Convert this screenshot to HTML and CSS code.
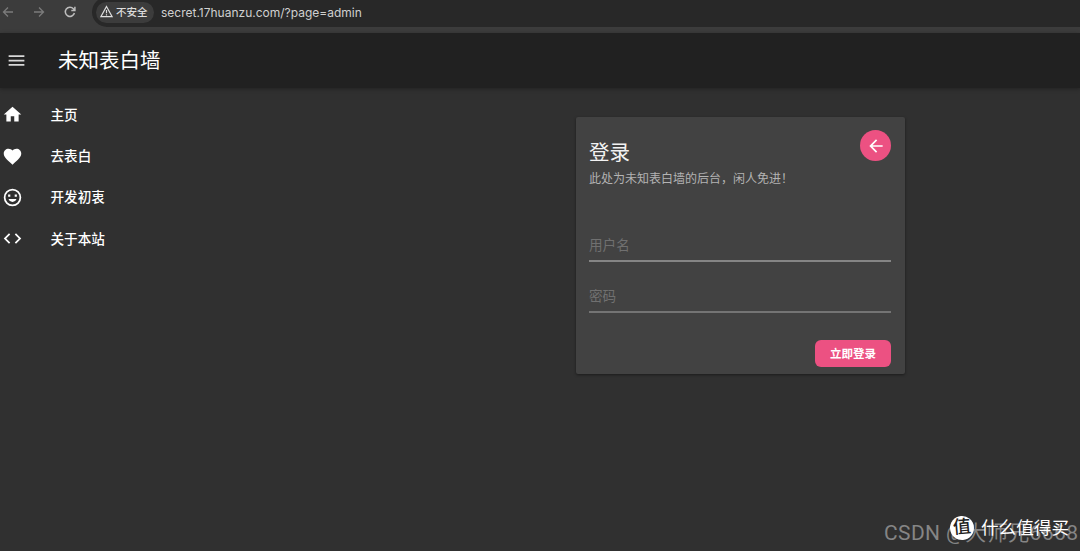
FILE: index.html
```html
<!DOCTYPE html>
<html lang="zh-CN">
<head>
    <meta charset="UTF-8">
    <meta name="viewport" content="width=device-width, initial-scale=1.0">
    <title>未知表白墙</title>
    <link rel="stylesheet" href="styles.css">
</head>
<body>
    <div class="browser-bar">
        <svg class="nav-icon" viewBox="0 0 12 12"><path d="M11 6H1.5M6 1.5L1.5 6L6 10.5"/></svg>
        <svg class="nav-icon" viewBox="0 0 12 12"><path d="M1 6H10.5M6 1.5L10.5 6L6 10.5"/></svg>
        <svg class="nav-icon reload" viewBox="0 0 12 12"><path d="M10.4 7A4.6 4.6 0 1 1 9.4 2.8L10.8 4.2M10.9 0.8V4.4H7.3"/></svg>
        <div class="address">
            <span class="chip">
                <svg class="warn" viewBox="0 0 12 12"><path d="M6 1.4L11.2 10.7H0.8ZM6 4.6V7.6M6 8.6V9.6"/></svg>
                不安全
            </span>
            <span class="url">secret.17huanzu.com/?page=admin</span>
        </div>
    </div>

    <header class="appbar">
        <svg class="menu-icon" viewBox="0 0 24 24"><path d="M3 18h18v-2H3v2zm0-5h18v-2H3v2zm0-7v2h18V6H3z"/></svg>
        <h1>未知表白墙</h1>
    </header>

    <div class="content">
        <nav class="drawer">
            <a class="item">
                <svg viewBox="0 0 24 24"><path d="M10 20v-6h4v6h5v-8h3L12 3 2 12h3v8z"/></svg>
                <span>主页</span>
            </a>
            <a class="item">
                <svg viewBox="0 0 24 24"><path d="M12 21.35l-1.45-1.32C5.4 15.36 2 12.28 2 8.5 2 5.42 4.42 3 7.5 3c1.74 0 3.41.81 4.5 2.09C13.09 3.81 14.76 3 16.5 3 19.58 3 22 5.42 22 8.5c0 3.78-3.4 6.86-8.55 11.54L12 21.35z"/></svg>
                <span>去表白</span>
            </a>
            <a class="item">
                <svg viewBox="0 0 24 24"><path d="M12 2a10 10 0 1 0 0 20a10 10 0 0 0 0-20zM12 20a8 8 0 1 1 0-16a8 8 0 0 1 0 16zM7 8.5h2.5v2.5H7zM14.5 8.5H17v2.5h-2.5zM7.5 13.8c.6 2 2.3 3.2 4.5 3.2s3.9-1.2 4.5-3.2z"/></svg>
                <span>开发初衷</span>
            </a>
            <a class="item">
                <svg viewBox="0 0 24 24"><path d="M9.4 16.6L4.8 12l4.6-4.6L8 6l-6 6 6 6 1.4-1.4zm5.2 0l4.6-4.6-4.6-4.6L16 6l6 6-6 6-1.4-1.4z"/></svg>
                <span>关于本站</span>
            </a>
        </nav>

        <form class="card">
            <div class="card-head">
                <div>
                    <h2>登录</h2>
                    <p>此处为未知表白墙的后台，闲人免进！</p>
                </div>
                <button type="button" class="back" aria-label="返回">
                    <svg viewBox="0 0 24 24"><path d="M20 11H7.83l5.59-5.59L12 4l-8 8 8 8 1.41-1.41L7.83 13H20v-2z"/></svg>
                </button>
            </div>
            <input type="text" name="username" placeholder="用户名">
            <input type="password" name="password" placeholder="密码">
            <button type="submit" class="submit">立即登录</button>
        </form>
    </div>

    <div class="csdn">CSDN @大师兄6668</div>
    <div class="smzdm"><span class="badge">值</span>什么值得买</div>
</body>
</html>
```

FILE: styles.css
```css
* {
    box-sizing: border-box;
}

body {
    margin: 0;
    height: 551px;
    overflow: hidden;
    position: relative;
    background-color: #303030;
    color: #ffffff;
    font-family: "Liberation Sans", "Noto Sans CJK SC", sans-serif;
}

.browser-bar {
    display: flex;
    align-items: flex-start;
    height: 33px;
    background-color: #3c3c3c;
}

.nav-icon {
    width: 12px;
    height: 12px;
    margin: 6px 17px 0 2px;
    fill: none;
    stroke: #7b7b7b;
    stroke-width: 1.3;
}

.nav-icon.reload {
    margin-right: 16px;
    stroke: #bdbdbd;
    stroke-width: 1.5;
}

.address {
    flex: 1;
    display: flex;
    align-items: center;
    height: 30px;
    margin-top: -3px;
    padding-left: 4px;
    border-radius: 15px 0 0 15px;
    background-color: #282828;
}

.chip {
    display: flex;
    align-items: center;
    width: 58px;
    height: 21px;
    padding: 0 0 1px 4px;
    border-radius: 11px;
    background-color: #3c3c3c;
    font-size: 10.5px;
    font-weight: 500;
    color: #dddddd;
    white-space: nowrap;
}

.warn {
    width: 13px;
    height: 13px;
    margin-right: 3px;
    fill: none;
    stroke: #dddddd;
    stroke-width: 1.1;
}

.url {
    margin-left: 7px;
    font-family: Inter, sans-serif;
    font-size: 12px;
    color: #d0d0d0;
}

.appbar {
    position: relative;
    display: flex;
    align-items: center;
    height: 55px;
    padding-left: 6px;
    background-color: #212121;
    box-shadow: 0 1px 4px rgba(0, 0, 0, 0.3);
}

.menu-icon {
    width: 21px;
    height: 21px;
    margin-right: 31px;
    fill: #d8d8d8;
}

h1 {
    margin: 0;
    font-size: 20.5px;
    line-height: 30px;
    font-weight: 400;
}

.content {
    display: flex;
    align-items: flex-start;
}

.drawer {
    width: 575.5px;
    padding-top: 6.4px;
}

.item {
    display: flex;
    align-items: center;
    height: 41.2px;
    padding-left: 2.4px;
    font-size: 13.6px;
    font-weight: 500;
}

.item span {
    padding-bottom: 2px;
}

.item svg {
    width: 21px;
    height: 21px;
    margin-right: 27.1px;
    fill: #ffffff;
}

.card {
    display: flex;
    flex-direction: column;
    width: 329.5px;
    height: 257px;
    margin-top: 29px;
    padding: 13.4px 14px 0 13.5px;
    border-radius: 2px;
    background-color: #424242;
    box-shadow: 0 1px 3px rgba(0, 0, 0, 0.45);
}

.card-head {
    display: flex;
    justify-content: space-between;
    height: 98px;
}

h2 {
    margin: 8px 0 0;
    font-size: 20.5px;
    line-height: 30px;
    font-weight: 400;
    color: #f2f2f2;
}

p {
    margin: 2px 0 0;
    font-size: 12px;
    line-height: 18px;
    color: #b3b3b3;
}

.back {
    display: flex;
    align-items: center;
    justify-content: center;
    width: 31px;
    height: 31px;
    padding: 0;
    border: none;
    border-radius: 50%;
    background-color: #ec5182;
}

.back svg {
    width: 20px;
    height: 20px;
    fill: #ffffff;
}

input {
    width: 302px;
    height: 34px;
    margin: 0 0 17px;
    padding: 2px 0 0;
    border: none;
    border-bottom: 2px solid #858585;
    border-radius: 0;
    background: none;
    font-family: inherit;
    font-size: 13.6px;
    color: #ffffff;
}

input[type="password"] {
    border-bottom-color: #747474;
}

input::placeholder {
    color: #707070;
}

.submit {
    align-self: flex-end;
    width: 76px;
    height: 27px;
    margin-top: 10px;
    padding: 0 0 1px;
    border: none;
    border-radius: 6px;
    background-color: #ec5182;
    color: #ffffff;
    font-family: inherit;
    font-size: 11.5px;
    font-weight: 700;
}

/* watermarks over the page */
.csdn {
    position: absolute;
    left: 884px;
    top: 518px;
    font-family: Roboto, "Noto Sans CJK SC", sans-serif;
    font-size: 21px;
    line-height: 30px;
    letter-spacing: 0.4px;
    color: #858585;
    white-space: nowrap;
}

.smzdm {
    position: absolute;
    left: 950px;
    top: 515px;
    display: flex;
    align-items: center;
    font-size: 17.6px;
    line-height: 26px;
    white-space: nowrap;
}

.badge {
    width: 24px;
    height: 24px;
    margin-right: 7px;
    border-radius: 50%;
    background-color: #ffffff;
    color: #222222;
    font-size: 18px;
    line-height: 23px;
    font-weight: 500;
    text-align: center;
    transform: rotate(-5deg);
}
```
